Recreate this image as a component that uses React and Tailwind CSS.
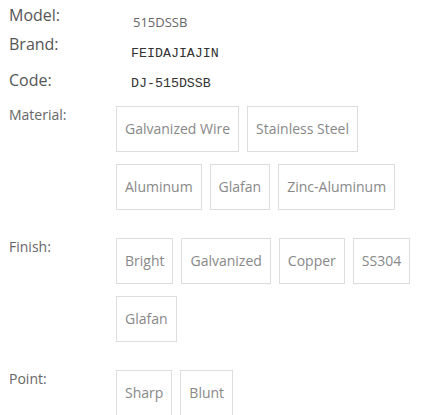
import React from "react";

const specs = [
  { label: "Model:", value: "515DSSB", row: "h-[29px]", valuePad: "pt-[13px] pl-[2px]", mono: false },
  { label: "Brand:", value: "FEIDAJIAJIN", row: "h-[36px]", valuePad: "pt-[17px]", mono: true },
  { label: "Code:", value: "DJ-515DSSB", row: "h-[41px]", valuePad: "pt-[11px]", mono: true },
];

const options = [
  { label: "Material:", items: ["Galvanized Wire", "Stainless Steel", "Aluminum", "Glafan", "Zinc-Aluminum"] },
  { label: "Finish:", items: ["Bright", "Galvanized", "Copper", "SS304", "Glafan"] },
  { label: "Point:", items: ["Sharp", "Blunt"] },
];

const App = () => {
  return (
    <div className="w-[422px] h-[415px] overflow-hidden bg-white pl-[9px] font-['Open_Sans',sans-serif]">
      {specs.map((spec) => (
        <div key={spec.label} className={`flex items-start ${spec.row}`}>
          <div className="w-[122px] pt-[5px] text-[16px] leading-[20px] text-[#555]">{spec.label}</div>
          {spec.mono ? (
            <div className={`${spec.valuePad} font-['Liberation_Mono',monospace] text-[13.3px] leading-[16px] text-[#333]`}>
              {spec.value}
            </div>
          ) : (
            <div className={`${spec.valuePad} text-[13px] leading-[18px] text-[#666]`}>{spec.value}</div>
          )}
        </div>
      ))}

      {options.map((group) => (
        <div key={group.label} className="flex items-start pb-[28px]">
          <div className="w-[107px] shrink-0 -mt-[1px] text-[14px] leading-[20px] text-[#666]">{group.label}</div>
          <div className="flex flex-wrap gap-x-[8px] gap-y-[12px] flex-1">
            {group.items.map((item, i) => (
              <div
                key={i}
                className="border border-[#dddddd] px-[8px] py-[12px] text-[14px] leading-[20px] text-[#888]"
              >
                {item}
              </div>
            ))}
          </div>
        </div>
      ))}
    </div>
  );
};

export default App;
